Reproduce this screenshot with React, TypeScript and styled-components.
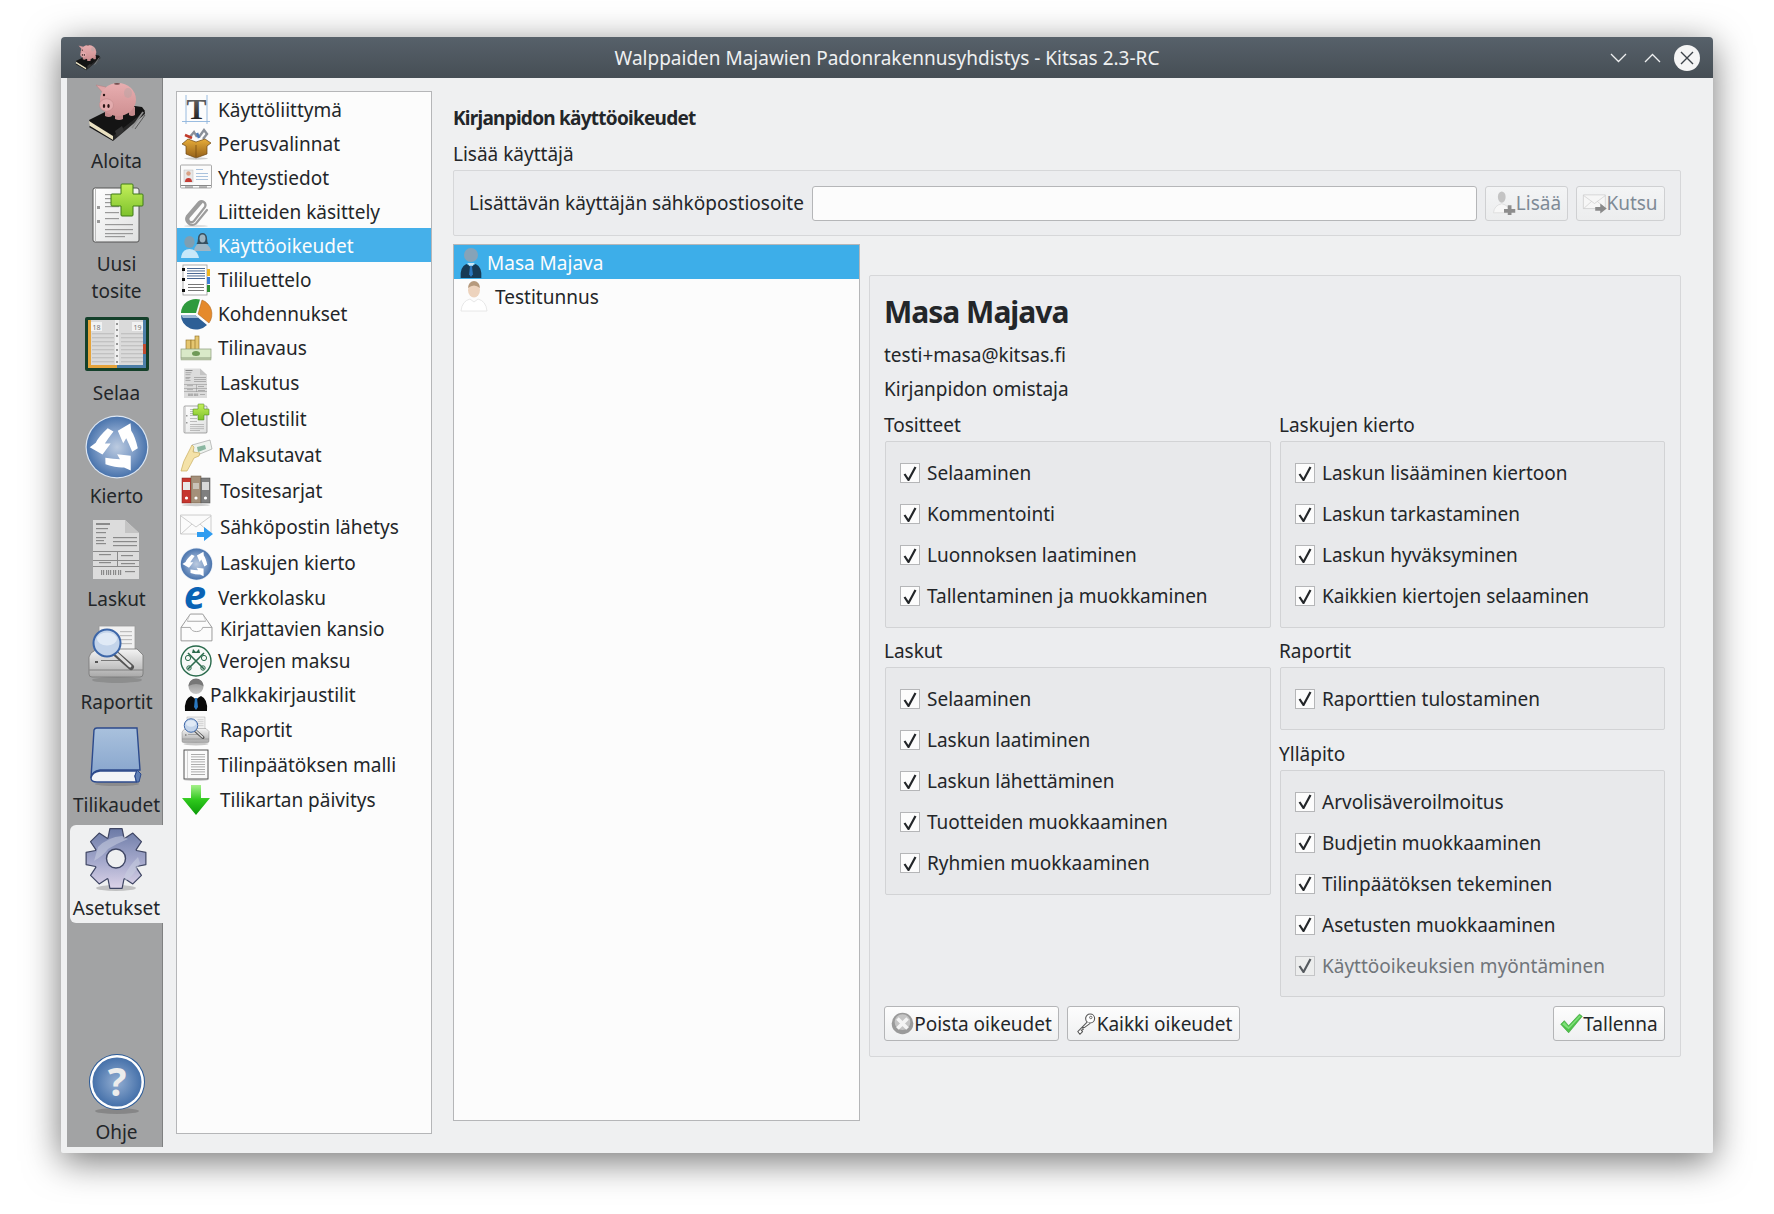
import React from "react";
import styled, { createGlobalStyle } from "styled-components";

const Global = createGlobalStyle`
  html, body { margin: 0; padding: 0; background: #fff; }
  body { font-family: "Noto Sans", sans-serif; font-size: 19px; color: #232629; }
`;

/* ---------- shared svg gradients ---------- */
const DefsSvg = styled.svg`display: block; width: 0; height: 0;`;
const Defs = () => (
  <DefsSvg aria-hidden="true">
    <defs>
      <linearGradient id="pig" x1="0" y1="0" x2="0" y2="1"><stop offset="0" stopColor="#e8aeb0" /><stop offset="1" stopColor="#cf9092" /></linearGradient>
      <radialGradient id="disc" cx=".5" cy=".5" r=".55"><stop offset="0" stopColor="#bccbe0" /><stop offset=".55" stopColor="#7c9bc6" /><stop offset="1" stopColor="#3d6aa6" /></radialGradient>
      <radialGradient id="help" cx=".5" cy=".5" r=".55"><stop offset="0" stopColor="#93aed2" /><stop offset="1" stopColor="#3e6ba6" /></radialGradient>
      <linearGradient id="gear" x1="0" y1="0" x2="0" y2="1"><stop offset="0" stopColor="#6b7aa6" /><stop offset=".55" stopColor="#a5a9cc" /><stop offset="1" stopColor="#dcd3e8" /></linearGradient>
      <linearGradient id="page" x1="0" y1="0" x2="1" y2="1"><stop offset="0" stopColor="#fff" /><stop offset="1" stopColor="#dfe0e0" /></linearGradient>
      <linearGradient id="plus" x1="0" y1="0" x2="0" y2="1"><stop offset="0" stopColor="#c4ef5a" /><stop offset="1" stopColor="#7dc22c" /></linearGradient>
      <linearGradient id="cover" x1="0" y1="0" x2="0" y2="1"><stop offset="0" stopColor="#a9c1dd" /><stop offset="1" stopColor="#86a4cc" /></linearGradient>
      <linearGradient id="printer" x1="0" y1="0" x2="0" y2="1"><stop offset="0" stopColor="#f4f4f4" /><stop offset="1" stopColor="#a9a9a9" /></linearGradient>
      <linearGradient id="down" x1="0" y1="0" x2="0" y2="1"><stop offset="0" stopColor="#a5f08a" /><stop offset=".5" stopColor="#2ec81c" /><stop offset="1" stopColor="#0b9a08" /></linearGradient>
      <linearGradient id="tglyph" x1="0" y1="0" x2="0" y2="1"><stop offset="0" stopColor="#777" /><stop offset="1" stopColor="#111" /></linearGradient>
      <linearGradient id="box" x1="0" y1="0" x2="0" y2="1"><stop offset="0" stopColor="#e8ad38" /><stop offset="1" stopColor="#94601a" /></linearGradient>
      <linearGradient id="suit" x1="0" y1="0" x2="0" y2="1"><stop offset="0" stopColor="#8a8a8a" /><stop offset="1" stopColor="#c8c8c8" /></linearGradient>
    </defs>
  </DefsSvg>
);

type IP = { s?: number };
const Svg: React.FC<{ s?: number; v?: number; children: React.ReactNode }> = ({ s = 64, v = 64, children }) => (
  <svg width={s} height={s} viewBox={`0 0 ${v} ${v}`} style={{ display: "block", flex: "none", overflow: "visible" }}>{children}</svg>
);

const PigIcon = ({ s }: IP) => (
  <Svg s={s}>
    <path d="M4 39 L22 30 L50 25 L57 26 L60 30 L28 57 L6 44 Z" fill="#141414" />
    <path d="M4 40 L28 55 L28 59 L5 45 Z" fill="#e9e0c0" />
    <path d="M5 45 L28 59 L28 60 L4 46 Z" fill="#111" />
    <path d="M28 55 L60 30 L60 33 L28 60 Z" fill="#262626" />
    <path d="M30 50 L37 45 L39 50 L32 56 Z" fill="#333" />
    <path d="M47 47 L58 31" stroke="#8f8f8f" strokeWidth="1.6" />
    <path d="M50 48 L60 34" stroke="#5a5a5a" strokeWidth="1" />
    <path d="M11 4 L21 6 L18 12 Z" fill="#e0a5a7" stroke="#b37f80" strokeWidth=".5" />
    <path d="M20 26 h7 v9 q-3 2 -7 0z M30 28 h8 v10 q-4 2 -8 0z M44 26 h6 v8 q-3 2 -6 0z" fill="#c48a8c" />
    <ellipse cx="33" cy="18.5" rx="18" ry="16.5" fill="url(#pig)" />
    <ellipse cx="21.5" cy="24" rx="7" ry="6.2" fill="#e3abad" stroke="#bd8486" strokeWidth=".5" />
    <ellipse cx="19" cy="25" rx="1.2" ry="2" fill="#2a1414" />
    <ellipse cx="23.5" cy="25" rx="1.2" ry="2" fill="#2a1414" />
    <circle cx="19" cy="14" r="1.2" fill="#2a1414" />
    <ellipse cx="32" cy="2.8" rx="3" ry=".9" fill="#6d4a4a" />
    <ellipse cx="43" cy="12" rx="4" ry="5" fill="#b7a3a3" opacity=".5" />
  </Svg>
);

const DocPlus = ({ s }: IP) => (
  <Svg s={s}>
    <rect x="8" y="6" width="46" height="54" rx="2" fill="url(#page)" stroke="#555" strokeWidth="1" />
    <rect x="10" y="6" width="1" height="54" fill="#bbb" />
    <g fill="#999">
      {[12, 16, 20, 24, 30, 36, 42, 47, 51].map((y, i) => <rect key={y} x={20} y={y} width={i < 6 ? 14 : 28} height="1.2" />)}
      <rect x="20" y="54" width="20" height="1.2" />
      <rect x="12" y="24" width="3" height="3" /><rect x="12" y="38" width="3" height="3" />
    </g>
    <path d="M37 2 h10 a1 1 0 0 1 1 1 v9 h9 a1 1 0 0 1 1 1 v10 a1 1 0 0 1 -1 1 h-9 v9 a1 1 0 0 1 -1 1 h-10 a1 1 0 0 1 -1 -1 v-9 h-9 a1 1 0 0 1 -1 -1 v-10 a1 1 0 0 1 1 -1 h9 v-9 a1 1 0 0 1 1 -1z" fill="url(#plus)" stroke="#3e7a16" strokeWidth="1" />
  </Svg>
);

const Journal = ({ s }: IP) => (
  <Svg s={s}>
    <rect x="0" y="6" width="64" height="54" rx="2" fill="#14402a" />
    <rect x="3" y="9" width="58" height="48" fill="#dadada" />
    <path d="M3 9 h3 v45 h26 v3 h-29z" fill="#e5a33a" />
    <path d="M58 9 h3 v48 h-29 v-3 h26z" fill="#4c7ea8" />
    <rect x="58" y="33" width="3" height="10" fill="#c04a30" />
    <rect x="30" y="9" width="4" height="45" fill="#f0f0f0" />
    <g fill="#c2c2c2">{[22, 26, 30, 34, 38, 42, 46, 50].map(y => <React.Fragment key={y}><rect x="7" y={y} width="22" height="1.4" /><rect x="36" y={y} width="22" height="1.4" /></React.Fragment>)}</g>
    <rect x="6" y="11" width="11" height="9" fill="#f2f2f2" /><rect x="47" y="11" width="11" height="9" fill="#f2f2f2" />
    <text x="7.5" y="18.5" fontSize="7" fontFamily="Noto Sans" fill="#777">18</text>
    <text x="48.5" y="18.5" fontSize="7" fontFamily="Noto Sans" fill="#777">19</text>
    <g fill="#777">{[13, 19, 25, 33, 39, 45, 51].map(y => <circle key={y} cx="32" cy={y} r="1" />)}</g>
  </Svg>
);

const Cycle = ({ s }: IP) => (
  <Svg s={s}>
    <circle cx="32" cy="33" r="31.5" fill="#dbe5f2" />
    <circle cx="32" cy="33" r="30.3" fill="url(#disc)" />
    {[0, 120, 240].map(a => (
      <path key={a} transform={`rotate(${a} 32 33)`} d="M52.8 34.3 Q50 22 46.2 16.7 L45.5 9.3 L32.8 16.7 L38.2 29.3 L41.2 24.3 Q44 30 47.2 37.7 Z" fill="#fff" />
    ))}
  </Svg>
);

const Invoice = ({ s }: IP) => (
  <Svg s={s}>
    <path d="M8 3 h32 l14 13 v46 h-46z" fill="#dcdcdc" />
    <path d="M40 3 l14 13 h-14z" fill="#c4c4c4" />
    <g fill="#8a8a8a">
      <rect x="11" y="6" width="14" height="2" /><rect x="11" y="11" width="12" height="1.2" /><rect x="11" y="15" width="10" height="1.2" />
      <rect x="11" y="20" width="10" height="1.2" /><rect x="11" y="23" width="8" height="1.2" /><rect x="11" y="26" width="10" height="1.2" />
      <rect x="28" y="20" width="24" height="1.2" /><rect x="28" y="24" width="24" height="1.2" /><rect x="28" y="28" width="24" height="1.2" />
      <rect x="8" y="34" width="46" height="1" /><rect x="8" y="43" width="46" height="1" /><rect x="8" y="49" width="46" height="1" /><rect x="32" y="35" width="1" height="15" />
      <rect x="14" y="37" width="12" height="1.2" /><rect x="14" y="45" width="12" height="1.2" /><rect x="36" y="38" width="12" height="1.2" /><rect x="36" y="46" width="14" height="1.2" />
      {[16, 18, 21, 23, 25, 28, 30, 33, 35].map(x => <rect key={x} x={x} y="53" width="1.2" height="5" />)}
      <rect x="40" y="54" width="10" height="1.2" />
    </g>
  </Svg>
);

const PrinterLens = ({ s }: IP) => (
  <Svg s={s}>
    <ellipse cx="32" cy="60" rx="25" ry="3" fill="#666" opacity=".35" />
    <rect x="14" y="6" width="36" height="30" fill="#f1f1f1" stroke="#999" strokeWidth=".8" />
    <g fill="#bdbdbd">{[11, 15, 19, 23].map(y => <rect key={y} x="35" y={y} width="12" height="1.2" />)}</g>
    <path d="M6 33 L12 29 H52 L58 35 V54 a3 3 0 0 1 -3 3 H7 a3 3 0 0 1 -3 -3 V37z" fill="url(#printer)" stroke="#777" strokeWidth=".8" />
    <rect x="4" y="49" width="54" height="2" fill="#888" opacity=".6" />
    <rect x="10" y="41" width="3" height="2" fill="#555" /><rect x="16" y="40" width="26" height="1" fill="#777" />
    <path d="M30 33 L46 47" stroke="#555" strokeWidth="6" strokeLinecap="round" />
    <path d="M31 33 L45 46" stroke="#ddd" strokeWidth="3" strokeLinecap="round" />
    <circle cx="22" cy="23" r="13.5" fill="#c3d4ea" stroke="#3c66a8" strokeWidth="2" />
    <ellipse cx="22" cy="19" rx="10" ry="6.5" fill="#eaf1fa" opacity=".75" />
  </Svg>
);

const BlueBook = ({ s }: IP) => (
  <Svg s={s}>
    <ellipse cx="32" cy="61" rx="22" ry="2" fill="#555" opacity=".3" />
    <path d="M9 7 a3 3 0 0 1 3 -2 H52 L55 47 H15 Q7 48 6 55z" fill="url(#cover)" stroke="#2c4a8c" strokeWidth="1.4" />
    <path d="M6 55 Q7 49 15 48 H52 L50 53 L51.5 59 H12 Q6 59 6 55z" fill="#f2f4f8" stroke="#2c4a8c" strokeWidth="1.4" />
    <path d="M52 47 L56 51 L54 59 H51.5 L50 53z" fill="#5f7fb5" stroke="#2c4a8c" strokeWidth="1" />
  </Svg>
);

function gearPath(cx: number, cy: number, ro: number, ri: number, n: number) {
  const pts: string[] = [];
  const step = (Math.PI * 2) / n;
  for (let i = 0; i < n; i++) {
    const a = -Math.PI / 2 + i * step;
    const seq: [number, number][] = [[ri, -0.5], [ro, -0.27], [ro, 0.27], [ri, 0.5]];
    seq.forEach(([r, o]) => {
      const t = a + o * step * 0.95;
      pts.push(`${(cx + r * Math.cos(t)).toFixed(2)} ${(cy + r * Math.sin(t)).toFixed(2)}`);
    });
  }
  return `M${pts.join(" L")}Z`;
}

const Gear = ({ s }: IP) => (
  <Svg s={s}>
    <ellipse cx="31" cy="60" rx="20" ry="3" fill="#555" opacity=".3" />
    <path d={gearPath(31, 30.5, 30.5, 22, 8)} fill="url(#gear)" stroke="#3f4664" strokeWidth="1.2" strokeLinejoin="round" />
    <path d="M9 33 Q19 27 23 21 Q33 15 43 11 L37 8 Q23 9 13 19z M39 49 Q43 39 53 29 L55 35 Q49 47 41 53z" fill="#c9cde0" opacity=".55" />
    <circle cx="31" cy="30.5" r="9.5" fill="#eff0f1" stroke="#3f4664" strokeWidth="1.4" />
  </Svg>
);

const Help = ({ s }: IP) => (
  <Svg s={s}>
    <ellipse cx="32" cy="61" rx="22" ry="3" fill="#444" opacity=".3" />
    <circle cx="32" cy="32" r="28" fill="#2a5a98" />
    <circle cx="32" cy="32" r="27" fill="#fff" />
    <circle cx="32" cy="32" r="24.5" fill="url(#help)" />
    <text x="32" y="46" textAnchor="middle" fontSize="39" fontWeight="700" fontFamily="Noto Sans" fill="#ececec">?</text>
  </Svg>
);

/* list icons, 32 unit */
const S = ({ w = 32, children }: { w?: number; children: React.ReactNode }) => (
  <svg width={w} height={w} viewBox="0 0 32 32" style={{ display: "block", flex: "none", overflow: "visible" }}>{children}</svg>
);
const TIcon = () => (
  <S>
    <path d="M6 1 V30 M27 1 V30 M2 27.5 H30" stroke="#8fb4dc" strokeWidth=".9" fill="none" />
    <text x="16.5" y="25" textAnchor="middle" fontSize="30" fontWeight="700" fontFamily="Liberation Serif" fill="url(#tglyph)">T</text>
  </S>
);
const BoxIcon = () => (
  <S>
    <path d="M9 10 L14 4 L17 9 M19 9 L24 2 L27 6 L23 11" stroke="#8a8f98" strokeWidth="2.4" fill="none" />
    <path d="M5 7 L12 10" stroke="#c23b2b" strokeWidth="2.5" />
    <path d="M17 5 L19 10" stroke="#4d79b6" strokeWidth="2.5" />
    <path d="M2 16 L8 11 L16 14 L25 11 L31 15 L27 18 V26 L16 30 L6 26 V18z" fill="url(#box)" stroke="#6d4510" strokeWidth=".7" />
    <path d="M16 17 V30" stroke="#6d4510" strokeWidth=".7" />
    <ellipse cx="16" cy="30.5" rx="12" ry="1.2" fill="#888" opacity=".4" />
  </S>
);
const CardIcon = () => (
  <S>
    <rect x=".5" y="3" width="31" height="23" rx="1" fill="#fbfbfb" stroke="#aaa" />
    <rect x="4" y="8" width="9" height="12" fill="#e7e7e7" stroke="#bbb" strokeWidth=".5" />
    <circle cx="8.5" cy="11.5" r="2.2" fill="#d9a184" /><path d="M5 20 a3.5 4 0 0 1 7 0z" fill="#c43b34" />
    <g fill="#a9c2dd"><rect x="16" y="7" width="7" height="1" /><rect x="16" y="11" width="12" height="1" /><rect x="16" y="14" width="12" height="1" /><rect x="16" y="17" width="12" height="1" /></g>
    <rect x="1" y="23" width="30" height="1" fill="#888" />
    <path d="M5 25 h8 M19 25 h8" stroke="#777" strokeWidth="1.2" />
  </S>
);
const ClipIcon = () => (
  <S>
    <ellipse cx="16" cy="30" rx="12" ry="1.2" fill="#999" opacity=".3" />
    <path d="M22 6 L9 21 a3 3 0 0 0 5 4 L25 11 a4 4 0 0 0 -6 -5 L7 20 a6 6 0 0 0 9 7.5 L27 14" fill="none" stroke="#9c9c9c" strokeWidth="2.2" strokeLinecap="round" />
  </S>
);
const UsersIcon = () => (
  <S>
    <path d="M14 21 Q15 13 22 13 Q29 13 31 21z" fill="#9fb6c4" />
    <path d="M18 8 a4.5 5 0 0 1 9 0 q0 4 1.5 6 h-12 q1.5 -2 1.5 -6z" fill="#38505f" />
    <ellipse cx="22.5" cy="8.5" rx="3" ry="4" fill="#9cb4c2" />
    <path d="M1 28 Q2 19 9.5 19 Q17 19 19 28z" fill="#c8e8f9" />
    <ellipse cx="9.5" cy="12" rx="5.2" ry="6" fill="#7f9fb2" />
  </S>
);
const NotebookIcon = () => (
  <S>
    <rect x="3" y="1" width="24" height="30" fill="#fff" stroke="#999" strokeWidth=".8" />
    <g fill="#385a88">{[4, 6.5, 9, 11.5, 14].map(y => <rect key={y} x="7" y={y} width="18" height=".9" />)}</g>
    <g fill="#555">{[20, 23, 26].map(y => <rect key={y} x="8" y={y} width="16" height=".8" />)}</g>
    <g fill="#111">{[4, 14, 25].map(y => <rect key={y} x="2" y={y} width="3" height="3" />)}</g>
    <rect x="27" y="5" width="3" height="7" fill="#f0b620" /><rect x="27" y="13" width="3" height="7" fill="#3d7fd8" /><rect x="27" y="21" width="3" height="7" fill="#2f8f35" />
  </S>
);
const PieIcon = () => (
  <S>
    <path d="M16 15 L1 15 A15 14 0 0 1 20 1.5z" fill="#2f9a3d" />
    <path d="M18 16 L22 2 A15 15 0 0 1 29 25z" fill="#e58a2c" stroke="#a65e17" strokeWidth=".5" />
    <path d="M15 17 L27 27 A15 14 0 0 1 1 17z" fill="#2d5f96" />
    <path d="M1 17 H15 L19 20 H3z" fill="#bcd1e6" opacity=".8" />
  </S>
);
const MoneyIcon = () => (
  <S>
    <rect x="6" y="8" width="5" height="12" fill="#e5c670" stroke="#8a6a1e" strokeWidth=".6" />
    <rect x="11" y="8" width="5" height="12" fill="#e5c670" stroke="#8a6a1e" strokeWidth=".6" />
    <rect x="15" y="4" width="4" height="16" fill="#e5c670" stroke="#8a6a1e" strokeWidth=".6" />
    <rect x="1" y="17" width="30" height="9" fill="#d9e9c8" stroke="#8b9b7a" strokeWidth=".7" />
    <ellipse cx="16" cy="21.5" rx="4" ry="2.5" fill="#6f9a58" />
    <rect x="1" y="26" width="30" height="2" fill="#b9c9a8" stroke="#8b9b7a" strokeWidth=".4" />
  </S>
);
const HandIcon = () => (
  <S>
    <path d="M12 6 L30 1 L32 10 L15 17z" fill="#eef3ee" stroke="#999" strokeWidth=".6" />
    <path d="M17 8 l8 -2 l1 4 l-8 3z" fill="#8ab7a0" />
    <path d="M1 32 Q3 22 8 14 L12 6 L14 8 L13 13 L20 14 L19 17 L14 19 Q11 25 7 32z" fill="#f4e2a8" stroke="#c9ad5e" strokeWidth=".7" />
  </S>
);
const BindersIcon = () => (
  <S>
    <rect x="2" y="3" width="9" height="25" fill="#c6362f" stroke="#7e1d1a" strokeWidth=".5" />
    <rect x="11" y="1" width="10" height="27" fill="#a4907a" stroke="#65513d" strokeWidth=".5" />
    <rect x="21" y="3" width="9" height="25" fill="#7f7f7f" stroke="#4a4a4a" strokeWidth=".5" />
    <rect x="3" y="7" width="7" height="8" fill="#e8e8e8" /><rect x="13" y="8" width="6" height="6" fill="#c9c2b8" /><rect x="22" y="7" width="7" height="8" fill="#d8d8d8" />
    <circle cx="6.5" cy="23" r="1.6" fill="#fff" /><circle cx="16" cy="23" r="1.6" fill="#fff" /><circle cx="25.5" cy="23" r="1.6" fill="#fff" />
    <ellipse cx="16" cy="30" rx="14" ry="1.2" fill="#888" opacity=".4" />
  </S>
);
const MailArrow = ({ gray = false, w = 32 }: { gray?: boolean; w?: number }) => (
  <S w={w}>
    <path d="M.5 4 H31 V23 H.5z" fill={gray ? "#f6f6f6" : "#fbfbfb"} stroke="#c2c2c2" strokeWidth=".8" />
    <path d="M1 5 L16 16 L31 5 M1 23 L12 13 M31 23 L20 13" fill="none" stroke="#c8c8c8" strokeWidth=".9" />
    <path d="M17 21 H24 V16 L33 23 L24 30 V26 H17z" fill={gray ? "#8a8a8a" : "#2f9cf0"} />
  </S>
);
const EIcon = () => (
  <S>
    <text x="15" y="27" textAnchor="middle" fontSize="40" fontWeight="700" fontStyle="italic" fontFamily="Noto Sans" fill="#0a63b5">e</text>
  </S>
);
const TrayIcon = () => (
  <S w={33}>
    <path d="M1 14 L10 1 H22 L31 14 V27 H1z" fill="#fcfcfc" stroke="#888" strokeWidth=".8" />
    <path d="M7 8 H25 M1 14 H10 Q11 18 16 18 Q21 18 22 14 H31" fill="none" stroke="#999" strokeWidth=".8" />
    <path d="M9 3 L7 8 M23 3 L25 8" stroke="#bbb" strokeWidth=".6" />
  </S>
);
const TaxIcon = () => (
  <S>
    <circle cx="16" cy="16" r="15" fill="#f7f9f7" stroke="#27694a" strokeWidth="1.4" />
    <path d="M8 24 L24 8 M8 8 L24 24" stroke="#2a6a4b" strokeWidth="1.6" />
    <circle cx="8" cy="13" r="2.6" fill="none" stroke="#2a6a4b" /><circle cx="24" cy="13" r="2.6" fill="none" stroke="#2a6a4b" />
    <circle cx="9" cy="23" r="2.2" fill="none" stroke="#2a6a4b" /><circle cx="23" cy="23" r="2.2" fill="none" stroke="#2a6a4b" />
    <path d="M12 8 L13 4 L16 7 L19 4 L20 8z" fill="#2a6a4b" />
  </S>
);
const SuitIcon = ({ blue = false, w = 32 }: { blue?: boolean; w?: number }) => (
  <S w={w}>
    <circle cx="16" cy="7.5" r="7.5" fill={blue ? "#86a3b8" : "url(#suit)"} />
    {blue ? null : <path d="M8.5 7 a7.5 7.5 0 0 1 15 0 Q16 3 8.5 7z" fill="#777" />}
    <path d="M5 32 Q4 20 11 17 L16 20 L21 17 Q28 20 27 32z" fill={blue ? "#173a55" : "#0a0a0a"} />
    <path d="M12 16 L16 21 L20 16z" fill="#fff" opacity={blue ? .7 : 1} />
    <path d="M15 19 H17 L18 28 L16 31 L14 28z" fill="#2a78c0" />
  </S>
);
const PageIcon = () => (
  <S>
    <rect x="4" y="1" width="24" height="29" fill="#fafafa" stroke="#444" strokeWidth=".9" />
    <rect x="7" y="2" width=".6" height="27" fill="#bbb" />
    <g fill="#999">{[5, 7.5, 10, 12.5, 15, 17.5, 20, 22.5, 25].map(y => <rect key={y} x="11" y={y} width="14" height=".8" />)}</g>
    <ellipse cx="16" cy="31" rx="12" ry=".8" fill="#888" opacity=".5" />
  </S>
);
const DownIcon = () => (
  <S>
    <path d="M11 1 H21 V14 H30 L16 31 L2 14 H11z" fill="url(#down)" />
  </S>
);
const PlainPerson = () => (
  <S>
    <ellipse cx="15" cy="9" rx="6" ry="7.5" fill="#edd3bd" />
    <path d="M9 7 a6 7 0 0 1 12 0 Q15 2 9 7z" fill="#b69a7d" />
    <path d="M2 30 Q3 20 11 18 L15 21 L19 18 Q27 20 28 30z" fill="#fff" stroke="#e2e2e2" strokeWidth=".8" />
  </S>
);
const PersonPlus = () => (
  <S w={24}>
    <ellipse cx="13" cy="8" rx="5.2" ry="7.5" fill="#c4c4c4" />
    <path d="M2 29 Q3 19 13 17 Q23 19 24 29z" fill="#f7f7f7" stroke="#d6d6d6" strokeWidth=".9" />
    <path d="M21 19 h5 v5 h5 v5 h-5 v3 h-5 v-3 h-5 v-5 h5z" fill="#8d8d8d" />
  </S>
);
const XCircle = () => (
  <S w={23}>
    <circle cx="16" cy="16" r="15" fill="#9a9a9a" />
    <circle cx="16" cy="14" r="11" fill="#c4c4c4" />
    <path d="M9 9 L23 23 M23 9 L9 23" stroke="#f4f4f4" strokeWidth="5" />
  </S>
);
const KeyIcon = () => (
  <S w={22}>
    <circle cx="22" cy="8" r="6.5" fill="#fff" stroke="#555" strokeWidth="1.6" />
    <circle cx="23" cy="6.5" r="1.8" fill="none" stroke="#555" strokeWidth="1.2" />
    <path d="M18 13 L4 27 L7 31 L11 27 L9 25 L12 24 L11 21 L14 21 L22 15" fill="#fff" stroke="#555" strokeWidth="1.5" strokeLinejoin="round" />
  </S>
);
const GreenCheck = () => (
  <S w={23}>
    <path d="M1 17 L6 12 L12 19 L27 3 L31 6 L12 29z" fill="#4fc24a" stroke="#2f9a2d" strokeWidth=".8" />
    <path d="M3 17 L6 14 L12 21 L27 5 L29 6 L12 24z" fill="#7fe079" />
  </S>
);
const CheckMark = () => (
  <svg width="14" height="15" viewBox="0 0 14 15" style={{ display: "block" }}>
    <path d="M1.5 8 L5.5 14 L12.5 1" fill="none" stroke="currentColor" strokeWidth="2.2" />
  </svg>
);

/* ---------- layout ---------- */
const Page = styled.div`
  width: 1774px; height: 1214px; padding: 37px 0 0 61px; box-sizing: border-box; overflow: hidden;
`;
const Win = styled.div`
  width: 1652px; height: 1116px; display: flex; flex-direction: column; background: #eff0f1;
  border-radius: 4px 4px 2px 2px; box-shadow: 0 8px 36px rgba(0,0,0,.55);
`;
const TitleBar = styled.header`
  height: 41px; flex: none; display: grid; grid-template-columns: 1fr auto 1fr; align-items: center; padding: 0 13px;
  background: linear-gradient(#57616a, #464e55); border-radius: 4px 4px 0 0; color: #eff0f1;
`;
const TitleIcon = styled.div`width: 28px; height: 28px;`;
const TitleText = styled.div`text-align: center; font-size: 19px; white-space: nowrap;`;
const WinBtns = styled.div`display: flex; align-items: center; justify-content: flex-end; gap: 13px;`;
const WinBtn = styled.button`
  width: 21px; height: 21px; padding: 0; border: 0; background: none; color: #eff0f1; display: flex; align-items: center; justify-content: center;
`;
const CloseBtn = styled.button`
  width: 26px; height: 26px; margin-left: -2px; padding: 0; border: 0; border-radius: 50%; background: #f5f5f5; color: #3d4349; display: flex; align-items: center; justify-content: center;
`;
const Body = styled.div`flex: 1; display: flex; min-height: 0;`;
const Side = styled.nav`
  width: 96px; margin: 0 0 6px 6px; padding-left: 3px; box-sizing: border-box; flex: none; display: flex; flex-direction: column;
  background: #a2a3a4; border-right: 1px solid #7f8081;
`;
const NavItem = styled.div<{ $h: number; $active?: boolean; $mt?: number; $auto?: boolean }>`
  height: ${p => p.$h}px; flex: none; display: flex; flex-direction: column; align-items: center; margin-right: -1px;
  margin-top: ${p => (p.$auto ? "auto" : `${p.$mt ?? 0}px`)};
  background: ${p => (p.$active ? "#eff0f1" : "transparent")};
  border-radius: 6px 0 0 6px; color: #232629;
`;
const NavSlot = styled.div<{ $h: number }>`height: ${p => p.$h}px; display: flex; align-items: center; justify-content: center; flex: none;`;
const NavLabel = styled.div`font-size: 19px; line-height: 27px; text-align: center; white-space: nowrap;`;

const SetList = styled.div`
  width: 256px; height: 1043px; margin: 13px 0 0 13px; flex: none; box-sizing: border-box; border: 1px solid #b5b6b8; background: #fcfcfc;
`;
const SetRow = styled.div<{ $h: number; $sel?: boolean }>`
  height: ${p => p.$h}px; box-sizing: border-box; display: flex; align-items: center; padding: 2px 0 0 3px; white-space: nowrap; font-size: 19px;
  background: ${p => (p.$sel ? "#45b0ea" : "transparent")}; color: ${p => (p.$sel ? "#fcfcfc" : "#232629")};
`;
const SetIcon = styled.div<{ $w: number }>`width: ${p => p.$w}px; flex: none; display: flex;`;

const Content = styled.main`width: 1228px; margin-left: 21px; flex: none; display: flex; flex-direction: column; padding-top: 27px;`;
const H = styled.div`font-size: 19px; line-height: 27px; font-weight: 700; letter-spacing: -.75px;`;
const Caption = styled.div`font-size: 19px; line-height: 27px; margin-top: 9px;`;
const AddBox = styled.section`
  height: 66px; box-sizing: border-box; margin-top: 2px; margin-bottom: 8px; display: flex; align-items: center; padding: 0 15px; gap: 8px;
  border: 1px solid #d6d7d9; background: #ecedef; border-radius: 2px;
`;
const Input = styled.div`flex: 1; height: 35px; box-sizing: border-box; background: #fcfcfc; border: 1px solid #b5b6b8; border-radius: 3px;`;
const Btn = styled.button<{ $off?: boolean; $w?: number }>`
  height: 35px; box-sizing: border-box; display: flex; align-items: center; justify-content: center; padding: 0 6px; gap: 0;
  width: ${p => (p.$w ? `${p.$w}px` : "auto")}; flex: none;
  font: 19px "Noto Sans", sans-serif; color: ${p => (p.$off ? "#7e8a96" : "#232629")};
  background: ${p => (p.$off ? "linear-gradient(#f3f4f5,#ecedee)" : "linear-gradient(#fdfdfd,#eff0f1)")};
  border: 1px solid ${p => (p.$off ? "#cfd0d2" : "#b4b5b7")}; border-radius: 3px; white-space: nowrap;
`;
const Split = styled.div`flex: 1; display: flex; gap: 9px; align-items: flex-start;`;
const Users = styled.div`width: 407px; height: 877px; box-sizing: border-box; flex: none; border: 1px solid #b5b6b8; background: #fcfcfc;`;
const UserRow = styled.div<{ $sel?: boolean }>`
  height: 34px; box-sizing: border-box; padding-top: 2px; display: flex; align-items: center; font-size: 19px;
  background: ${p => (p.$sel ? "#3daee9" : "transparent")}; color: ${p => (p.$sel ? "#fcfcfc" : "#232629")};
`;
const UserIcon = styled.div<{ $w: number }>`width: ${p => p.$w}px; flex: none; display: flex; justify-content: center;`;
const Detail = styled.section`
  width: 812px; height: 782px; margin-top: 31px; box-sizing: border-box; flex: none; padding: 0 15px; display: flex; flex-direction: column;
  border: 1px solid #d6d7d9; background: #ecedef; border-radius: 2px;
`;
const Name = styled.h2`margin: 16px 0 0 -1px; font-size: 30px; line-height: 40px; font-weight: 700; letter-spacing: -1px; height: 40px;`;
const Info = styled.div<{ $mt: number }>`font-size: 19px; line-height: 27px; margin: ${p => p.$mt}px 0 0 -1px;`;
const Cols = styled.div`display: grid; grid-template-columns: 386px 385px; column-gap: 9px; margin-top: 9px; flex: none;`;
const Col = styled.div`display: flex; flex-direction: column;`;
const GroupLabel = styled.div<{ $mt?: number }>`font-size: 19px; line-height: 27px; height: 27px; margin: ${p => p.$mt ?? 0}px 0 2px -1px;`;
const Group = styled.div<{ $h: number }>`
  height: ${p => p.$h}px; box-sizing: border-box; padding: 0 14px; display: flex; flex-direction: column; justify-content: center;
  border: 1px solid #d2d3d5; background: #e8e9eb; border-radius: 2px;
`;
const Check = styled.label<{ $off?: boolean }>`
  height: 41px; flex: none; display: flex; align-items: center; gap: 7px; font-size: 19px; white-space: nowrap; color: ${p => (p.$off ? "#70757a" : "#232629")};
`;
const Box = styled.span<{ $off?: boolean }>`
  width: 20px; height: 20px; box-sizing: border-box; flex: none; display: flex; align-items: center; justify-content: center;
  background: ${p => (p.$off ? "#eceded" : "#fcfcfc")}; border: 1px solid ${p => (p.$off ? "#c4c5c7" : "#b5b6b8")}; color: ${p => (p.$off ? "#555a5f" : "#232629")};
`;
const Actions = styled.div`margin: 9px 0 0 -1px; display: flex; gap: 8px; align-items: center;`;
const Spacer = styled.div`flex: 1;`;

/* ---------- data ---------- */
const settings: { t: string; h: number; w: number; i: React.ReactNode }[] = [
  { t: "Käyttöliittymä", h: 34, w: 38, i: <TIcon /> },
  { t: "Perusvalinnat", h: 34, w: 38, i: <BoxIcon /> },
  { t: "Yhteystiedot", h: 34, w: 38, i: <CardIcon /> },
  { t: "Liitteiden käsittely", h: 34, w: 38, i: <ClipIcon /> },
  { t: "Käyttöoikeudet", h: 34, w: 38, i: <UsersIcon /> },
  { t: "Tililuettelo", h: 34, w: 38, i: <NotebookIcon /> },
  { t: "Kohdennukset", h: 34, w: 38, i: <PieIcon /> },
  { t: "Tilinavaus", h: 34, w: 38, i: <MoneyIcon /> },
  { t: "Laskutus", h: 36, w: 40, i: <Invoice s={32} /> },
  { t: "Oletustilit", h: 36, w: 40, i: <DocPlus s={32} /> },
  { t: "Maksutavat", h: 36, w: 38, i: <HandIcon /> },
  { t: "Tositesarjat", h: 36, w: 40, i: <BindersIcon /> },
  { t: "Sähköpostin lähetys", h: 36, w: 40, i: <MailArrow /> },
  { t: "Laskujen kierto", h: 36, w: 40, i: <Cycle s={33} /> },
  { t: "Verkkolasku", h: 33, w: 38, i: <EIcon /> },
  { t: "Kirjattavien kansio", h: 30, w: 40, i: <TrayIcon /> },
  { t: "Verojen maksu", h: 33, w: 38, i: <TaxIcon /> },
  { t: "Palkkakirjaustilit", h: 35, w: 30, i: <SuitIcon w={32} /> },
  { t: "Raportit", h: 35, w: 40, i: <PrinterLens s={32} /> },
  { t: "Tilinpäätöksen malli", h: 35, w: 38, i: <PageIcon /> },
  { t: "Tilikartan päivitys", h: 35, w: 40, i: <DownIcon /> },
];

const groupsLeft = [
  { label: "Tositteet", h: 187, items: ["Selaaminen", "Kommentointi", "Luonnoksen laatiminen", "Tallentaminen ja muokkaminen"] },
  { label: "Laskut", h: 228, mt: 10, items: ["Selaaminen", "Laskun laatiminen", "Laskun lähettäminen", "Tuotteiden muokkaaminen", "Ryhmien muokkaaminen"] },
];
const groupsRight = [
  { label: "Laskujen kierto", h: 187, items: ["Laskun lisääminen kiertoon", "Laskun tarkastaminen", "Laskun hyväksyminen", "Kaikkien kiertojen selaaminen"] },
  { label: "Raportit", h: 63, mt: 10, items: ["Raporttien tulostaminen"] },
  { label: "Ylläpito", h: 227, mt: 11, items: ["Arvolisäveroilmoitus", "Budjetin muokkaaminen", "Tilinpäätöksen tekeminen", "Asetusten muokkaaminen", "!Käyttöoikeuksien myöntäminen"] },
];

const renderGroups = (gs: { label: string; h: number; mt?: number; items: string[] }[]) =>
  gs.map(g => (
    <React.Fragment key={g.label}>
      <GroupLabel $mt={g.mt}>{g.label}</GroupLabel>
      <Group $h={g.h}>
        {g.items.map(it => {
          const off = it.startsWith("!");
          return (
            <Check key={it} $off={off}>
              <Box $off={off}><CheckMark /></Box>
              {off ? it.slice(1) : it}
            </Check>
          );
        })}
      </Group>
    </React.Fragment>
  ));

export default function App() {
  return (
    <Page>
      <Global />
      <Defs />
      <Win>
        <TitleBar>
          <TitleIcon><PigIcon s={28} /></TitleIcon>
          <TitleText>Walppaiden Majawien Padonrakennusyhdistys - Kitsas 2.3-RC</TitleText>
          <WinBtns>
            <WinBtn aria-label="min"><svg width="17" height="10" viewBox="0 0 17 10"><path d="M1 1 L8.5 8.5 L16 1" fill="none" stroke="currentColor" strokeWidth="1.3" /></svg></WinBtn>
            <WinBtn aria-label="max"><svg width="17" height="10" viewBox="0 0 17 10"><path d="M1 9 L8.5 1.5 L16 9" fill="none" stroke="currentColor" strokeWidth="1.3" /></svg></WinBtn>
            <CloseBtn aria-label="close"><svg width="14" height="14" viewBox="0 0 14 14"><path d="M1 1 L13 13 M13 1 L1 13" stroke="currentColor" strokeWidth="1.4" /></svg></CloseBtn>
          </WinBtns>
        </TitleBar>
        <Body>
          <Side>
            <NavItem $h={98}><NavSlot $h={70}><PigIcon s={64} /></NavSlot><NavLabel>Aloita</NavLabel></NavItem>
            <NavItem $h={129}><NavSlot $h={75}><DocPlus s={64} /></NavSlot><NavLabel>Uusi<br />tosite</NavLabel></NavItem>
            <NavItem $h={103}><NavSlot $h={75}><Journal s={64} /></NavSlot><NavLabel>Selaa</NavLabel></NavItem>
            <NavItem $h={103}><NavSlot $h={75}><Cycle s={64} /></NavSlot><NavLabel>Kierto</NavLabel></NavItem>
            <NavItem $h={103}><NavSlot $h={75}><Invoice s={64} /></NavSlot><NavLabel>Laskut</NavLabel></NavItem>
            <NavItem $h={103}><NavSlot $h={75}><PrinterLens s={64} /></NavSlot><NavLabel>Raportit</NavLabel></NavItem>
            <NavItem $h={103}><NavSlot $h={75}><BlueBook s={64} /></NavSlot><NavLabel>Tilikaudet</NavLabel></NavItem>
            <NavItem $h={98} $active $mt={5}><NavSlot $h={70}><Gear s={64} /></NavSlot><NavLabel>Asetukset</NavLabel></NavItem>
            <NavItem $h={103} $auto><NavSlot $h={75}><Help s={64} /></NavSlot><NavLabel>Ohje</NavLabel></NavItem>
          </Side>
          <SetList>
            {settings.map(r => (
              <SetRow key={r.t} $h={r.h} $sel={r.t === "Käyttöoikeudet"}>
                <SetIcon $w={r.w}>{r.i}</SetIcon>{r.t}
              </SetRow>
            ))}
          </SetList>
          <Content>
            <H>Kirjanpidon käyttöoikeudet</H>
            <Caption>Lisää käyttäjä</Caption>
            <AddBox>
              <span>Lisättävän käyttäjän sähköpostiosoite</span>
              <Input />
              <Btn $off $w={83}><PersonPlus />Lisää</Btn>
              <Btn $off $w={89}><MailArrow gray w={23} />Kutsu</Btn>
            </AddBox>
            <Split>
              <Users>
                <UserRow $sel><UserIcon $w={33}><SuitIcon blue w={30} /></UserIcon>Masa Majava</UserRow>
                <UserRow><UserIcon $w={41}><PlainPerson /></UserIcon>Testitunnus</UserRow>
              </Users>
              <Detail>
                <Name>Masa Majava</Name>
                <Info $mt={10}>testi+masa@kitsas.fi</Info>
                <Info $mt={7}>Kirjanpidon omistaja</Info>
                <Cols>
                  <Col>{renderGroups(groupsLeft)}</Col>
                  <Col>{renderGroups(groupsRight)}</Col>
                </Cols>
                <Actions>
                  <Btn $w={175}><XCircle />Poista oikeudet</Btn>
                  <Btn $w={173}><KeyIcon />Kaikki oikeudet</Btn>
                  <Spacer />
                  <Btn $w={112}><GreenCheck />Tallenna</Btn>
                </Actions>
              </Detail>
            </Split>
          </Content>
        </Body>
      </Win>
    </Page>
  );
}
